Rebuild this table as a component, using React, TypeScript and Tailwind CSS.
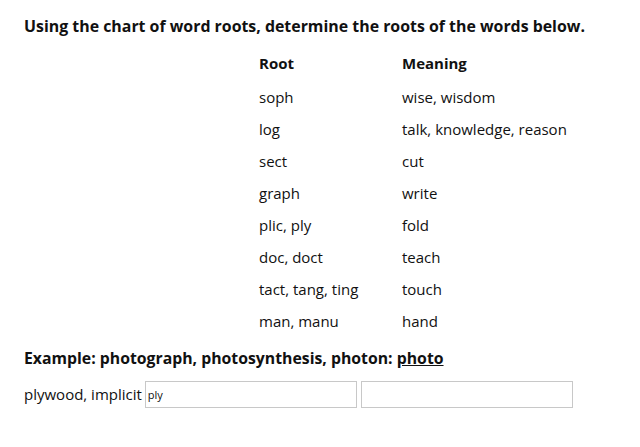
export default function App() {
  const rows: [string, string][] = [
    ["soph", "wise, wisdom"],
    ["log", "talk, knowledge, reason"],
    ["sect", "cut"],
    ["graph", "write"],
    ["plic, ply", "fold"],
    ["doc, doct", "teach"],
    ["tact, tang, ting", "touch"],
    ["man, manu", "hand"],
  ];

  return (
    <div className="w-[640px] h-[447px] bg-white text-[#111] pl-6 pt-[16px]" style={{ fontFamily: "'Open Sans', 'Liberation Sans', sans-serif" }}>
      <p className="text-[15.9px] font-bold leading-5">
        Using the chart of word roots, determine the roots of the words below.
      </p>
      <table className="ml-[235px] mt-[17px] text-[15px] leading-5">
        <thead>
          <tr>
            <th className="w-[143px] text-left font-bold h-[28px] align-top">Root</th>
            <th className="text-left font-bold h-[28px] align-top">Meaning</th>
          </tr>
        </thead>
        <tbody>
          {rows.map(([root, meaning]) => (
            <tr key={root} className="h-[32px]">
              <td>{root}</td>
              <td>{meaning}</td>
            </tr>
          ))}
        </tbody>
      </table>
      <p className="mt-[11px] text-[15.8px] font-bold leading-5">
        Example: photograph, photosynthesis, photon: <span className="underline">photo</span>
      </p>
      <div className="mt-[13px] flex items-center text-[15px]">
        <span className="mr-[3px]">plywood, implicit</span>
        <input
          className="w-[212px] h-[27px] border border-[#c8c8c8] px-[2px] text-[11px] outline-none"
          defaultValue="ply"
        />
        <input
          className="ml-[4px] w-[212px] h-[27px] border border-[#c8c8c8] px-[2px] text-[11px] outline-none"
          defaultValue=""
        />
      </div>
    </div>
  );
}
